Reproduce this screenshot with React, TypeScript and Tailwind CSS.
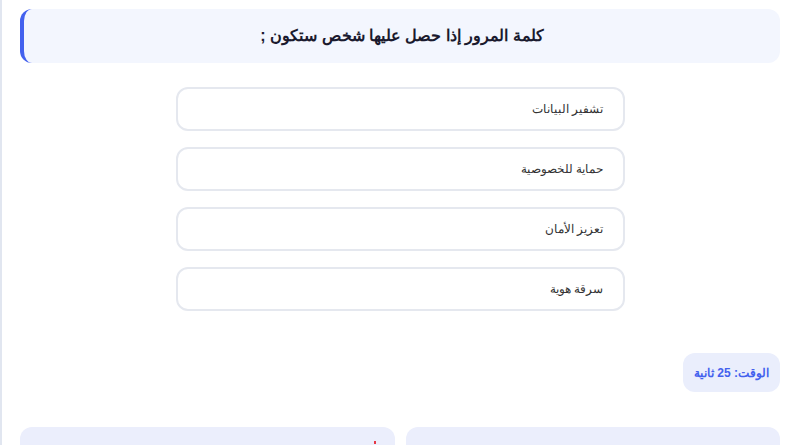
const OPTIONS = ["تشفير البيانات", "حماية للخصوصية", "تعزيز الأمان", "سرقة هوية"];

export default function App() {
  return (
    <div
      dir="rtl"
      className="h-screen overflow-hidden border-l-2 border-[#e1e6f0] bg-white"
      style={{ fontFamily: '"Liberation Sans", Arial, sans-serif' }}
    >
      <div className="mr-[13px] ml-[18px] flex w-[760px] flex-col pt-[9px]">
        <div className="flex h-[54px] items-center justify-center rounded-xl border-l-4 border-[#4361ee] bg-[#f3f6fe]">
          <h2 className="text-[16px] font-bold text-[#1a1a2e]">كلمة المرور إذا حصل عليها شخص ستكون ;</h2>
        </div>

        <div className="mt-[24px] flex flex-col items-center gap-[16px]">
          {OPTIONS.map((o) => (
            <button
              key={o}
              className="flex h-[44px] w-[449px] items-center rounded-xl border-2 border-[#e5e8ef] bg-white px-[19px] text-right text-[12px] text-[#333]"
            >
              {o}
            </button>
          ))}
        </div>

        <div className="mt-[42px] flex justify-start">
          <div className="flex h-[39px] items-center rounded-xl bg-[#eaeefc] px-[11px] text-[12px] font-bold text-[#4361ee]">
            الوقت: 25 ثانية
          </div>
        </div>

        <div className="mt-[35px] grid grid-cols-2 gap-[11px]">
          <div className="h-[80px] rounded-xl bg-[#ebeefc]" />
          <div className="relative h-[80px] rounded-xl bg-[#ebeefc]">
            <span className="absolute top-[14px] right-[19px] h-[3px] w-[2px] bg-[#e63946]" />
          </div>
        </div>
      </div>
    </div>
  );
}
